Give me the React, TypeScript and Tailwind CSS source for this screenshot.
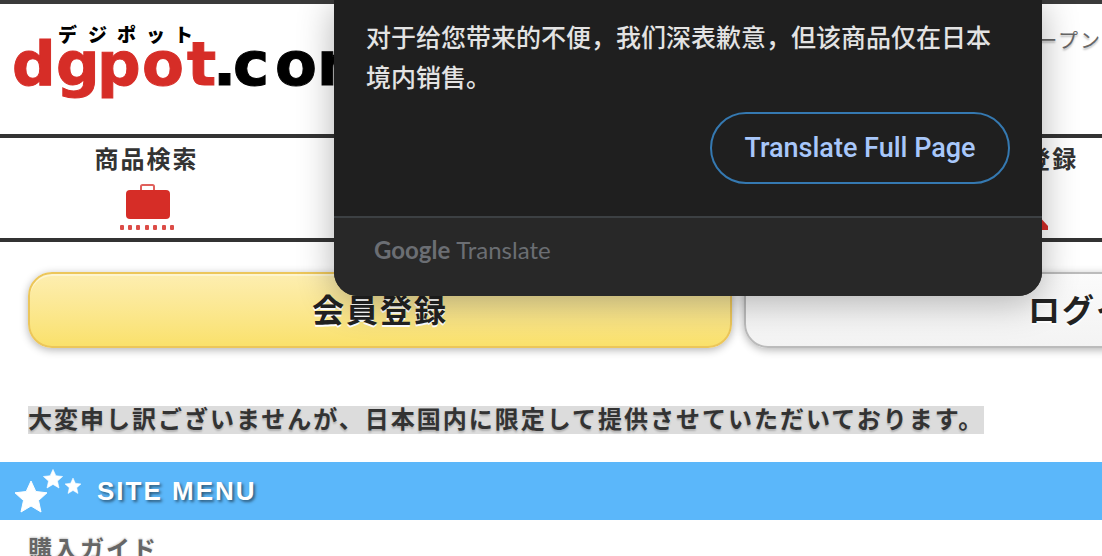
const navItems = [
  { label: "商品検索", icon: "case" },
  { label: "カテゴリ", icon: "none" },
  { label: "お知らせ", icon: "none" },
  { label: "会員登録", icon: "user" },
  { label: "カート", icon: "none" },
]

function Logo() {
  return (
    <svg
      width="380"
      height="90"
      viewBox="0 16 380 90"
      fontFamily="'DejaVu Sans', sans-serif"
      className="tracking-normal"
    >
      <text
        x="58 88 117 146 174"
        y="42"
        fontSize="19"
        fontWeight="900"
        fontFamily="'Noto Sans CJK JP', sans-serif"
      >
        デジポット
      </text>
      <g fontSize="61" fontWeight="700" strokeWidth="1">
        <text x="12 56 97 142 187" y="85" fill="#d62d27" stroke="#d62d27">
          dgpot
        </text>
        <text x="213 233 275 317" y="85" fill="#000" stroke="#000">
          .com
        </text>
      </g>
    </svg>
  )
}

function CaseIcon() {
  return (
    <svg width="56" height="48" viewBox="0 0 56 48" fill="#d62d27">
      <path d="M22 7V2.5a1.5 1.5 0 0 1 1.500-1.500h10a1.500 1.500 0 0 1 1.500 1.500V7" fill="none" stroke="#e0605c" strokeWidth="2" />
      <rect x="7" y="6" width="44" height="29" rx="4" />
      {[1, 9, 17, 26, 34, 43, 51].map((x) => (
        <rect key={x} x={x} y="41" width="4" height="5" rx="1" fillOpacity="0.85" />
      ))}
    </svg>
  )
}

function UserIcon() {
  return (
    <svg width="44" height="48" viewBox="0 0 44 48" fill="#d62d27">
      <circle cx="22" cy="14" r="11" />
      <path d="M0 46v-4l12-13h20l12 13v4z" />
    </svg>
  )
}

function Stars() {
  const star = "M0-16 4.800-5.500 16-4.200 7.500 3.500 10 15 0 9-10 15-7.500 3.500-16-4.200-4.800-5.500z"
  return (
    <svg width="70" height="48" viewBox="14 466 70 48" fill="#fff" stroke="#fff" strokeLinejoin="round">
      <path d={star} transform="translate(31 496)" />
      <path d={star} transform="translate(53 478) scale(.6)" />
      <path d={star} transform="translate(73 485) scale(.5)" />
    </svg>
  )
}

function TranslatePopup() {
  return (
    <aside className="absolute top-0 left-[334px] w-[708px] overflow-hidden rounded-b-3xl bg-[#1f1f1f] shadow-[0_6px_36px_rgba(0,0,0,0.3)]">
      <div className="flex flex-col px-8 pt-4 pb-8">
        <p
          lang="zh-CN"
          className="mb-4 font-['Noto_Sans_CJK_SC',sans-serif] text-[25px] leading-10 font-medium text-[#e3e3e3]"
        >
          对于给您带来的不便，我们深表歉意，但该商品仅在日本境内销售。
        </p>
        <button className="h-[72px] w-[300px] self-end rounded-full border-2 border-[#3579b1] pt-px font-[Roboto,sans-serif] text-[27px] font-medium text-[#a8c7fa]">
          Translate Full Page
        </button>
      </div>
      <div className="flex h-20 gap-[6px] border-t-2 border-[#3c4043] bg-[#282828] pt-4 pl-10 font-[Lato,sans-serif] text-2xl leading-8 text-[#6b6e73]">
        <span className="font-bold">Google</span>
        <span>Translate</span>
      </div>
    </aside>
  )
}

export default function App() {
  return (
    <div className="relative overflow-hidden bg-white font-['Noto_Sans_CJK_JP',sans-serif] text-[#333]">
      <div lang="ja" className="min-w-[1476px] tracking-[2px]">

        <header className="flex h-[134px] items-start border-t-4 border-[#3a3a3a] pt-3">
          <Logo />
          <p className="mt-2 mr-[374px] ml-auto text-xl leading-8 text-[#666] text-shadow-[0_2px_2px_rgba(0,0,0,0.25)]">
            オープン
          </p>
        </header>

        <nav className="grid h-[108px] grid-cols-5 border-y-4 border-[#333] pr-[10px]">
          {navItems.map((item) => (
            <a key={item.label} href="#" className="flex flex-col items-center pt-1 text-2xl leading-8 font-bold">
              <span>{item.label}</span>
              <span className="mt-[10px]">
                {item.icon === "case" && <CaseIcon />}
                {item.icon === "user" && <UserIcon />}
              </span>
            </a>
          ))}
        </nav>

        <div className="mt-[30px] grid grid-cols-2 gap-3 px-7 text-[32px] font-bold text-[#222]">
          <button className="h-[76px] rounded-3xl border-2 border-[#ecc65a] bg-linear-to-b from-[#fdeeb0] to-[#fae16b] pb-1 shadow-[0_2px_8px_rgba(0,0,0,0.3),inset_0_2px_0_rgba(255,255,255,0.4)] text-shadow-[0_2px_0_#fff]">
            会員登録
          </button>
          <button className="h-[76px] rounded-3xl border-2 border-[#bbb] bg-linear-to-b from-[#fbfbfb] to-[#f3f3f3] pb-1 shadow-[0_2px_8px_rgba(0,0,0,0.3)] text-shadow-[0_2px_0_#fff]">
            ログイン
          </button>
        </div>

        <p className="mt-[58px] mb-7 px-7 text-2xl leading-6 font-bold">
          <span className="inline-block bg-[#dcdcdc] pb-1 text-shadow-[0_2px_2px_rgba(0,0,0,0.2)]">
            大変申し訳ございませんが、日本国内に限定して提供させていただいております。
          </span>
        </p>

        <h2 className="flex h-[58px] items-center bg-[#5bb7fa] pl-[14px] font-['Liberation_Sans',sans-serif] text-[26px] font-bold text-white">
          <Stars />
          <span className="ml-[13px] text-shadow-[2px_2px_3px_rgba(0,0,0,0.5)]">SITE MENU</span>
        </h2>

        <div className="h-9 overflow-hidden px-7 pt-3">
          <a href="#" className="text-2xl leading-8 font-bold text-[#666] text-shadow-[0_-1px_2px_rgba(0,0,0,0.2)]">
            購入ガイド
          </a>
        </div>
      </div>

      <TranslatePopup />
    </div>
  )
}
